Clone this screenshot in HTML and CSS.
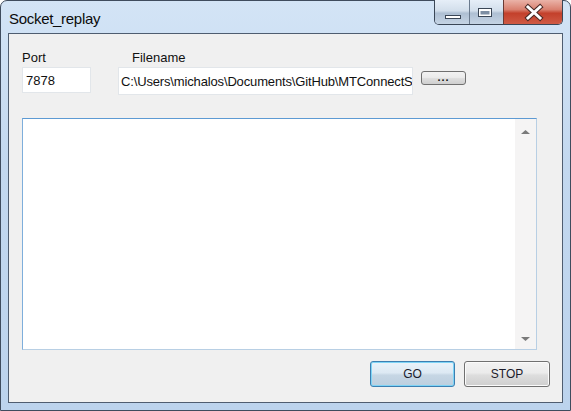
FILE: index.html
```html
<!DOCTYPE html>
<html>
<head>
<meta charset="utf-8">
<link rel="stylesheet" href="styles.css">
</head>
<body>
<div class="window">
  <div class="titlebar">
    <div class="title">Socket_replay</div>
    <div class="caption">
      <div class="cbtn min">
        <svg width="34" height="24" viewBox="0 0 34 24"><rect x="10.5" y="15.5" width="15" height="3" fill="#fff" stroke="#3a4656" stroke-width="1"/></svg>
      </div>
      <div class="cbtn max">
        <svg width="33" height="24" viewBox="0 0 33 24"><rect x="8.5" y="8.5" width="13" height="8" fill="#fff" stroke="#3a4656" stroke-width="1"/><rect x="10.5" y="11" width="9" height="3.5" fill="#7d8ea3"/></svg>
      </div>
      <div class="cbtn close">
        <svg width="59" height="24" viewBox="0 0 59 24"><path d="M24 7 L36 18 M36 7 L24 18" stroke="#4a2a26" stroke-width="5" stroke-linecap="square"/><path d="M24 7 L36 18 M36 7 L24 18" stroke="#ffffff" stroke-width="3" stroke-linecap="square"/></svg>
      </div>
    </div>
  </div>
  <div class="client">
    <div class="fields">
      <div class="field port">
        <div class="label">Port</div>
        <div class="textbox port-box">7878</div>
      </div>
      <div class="field file">
        <div class="label file-label">Filename</div>
        <div class="textbox file-box"><span class="path">C:\Users\michalos\Documents\GitHub\MTConnectS</span></div>
      </div>
      <div class="browse"><span class="dots">...</span></div>
    </div>
    <div class="log">
      <div class="log-text"></div>
      <div class="scrollbar">
        <svg class="arrow" width="21" height="10" viewBox="0 0 21 10"><path d="M6 7 L10.5 3 L15 7 Z" fill="#7a7a7a"/></svg>
        <svg class="arrow" width="21" height="10" viewBox="0 0 21 10"><path d="M6 3 L10.5 7 L15 3 Z" fill="#7a7a7a"/></svg>
      </div>
    </div>
    <div class="actions">
      <div class="btn go">GO</div>
      <div class="btn stop">STOP</div>
    </div>
  </div>
</div>
</body>
</html>
```
FILE: styles.css
```css
html, body {
  margin: 0;
  padding: 0;
  width: 571px;
  height: 411px;
  overflow: hidden;
  background: #ffffff;
}

.window {
  box-sizing: border-box;
  width: 571px;
  height: 411px;
  border: 1px solid #3f4c5e;
  border-radius: 7px 7px 0 0;
  background: linear-gradient(180deg, #d3e4f6 0%, #c3d8ef 40%, #bcd3ed 100%);
  display: flex;
  flex-direction: column;
  font-family: "Liberation Sans", Arial, sans-serif;
  color: #111;
}

.titlebar {
  height: 32px;
  display: flex;
  justify-content: space-between;
  align-items: flex-start;
  padding: 0 7px 0 8px;
}

.title {
  font-size: 15px;
  padding-top: 9px;
  letter-spacing: -0.3px;
  color: #0c0c0c;
}

.caption {
  display: flex;
  margin-top: -1px;
  height: 24px;
  border: 1px solid #3a4656;
  border-top: none;
  border-radius: 0 0 5px 5px;
  overflow: hidden;
}

.cbtn {
  height: 24px;
}

.cbtn svg {
  display: block;
}

.min {
  width: 34px;
  border-right: 1px solid #6a7a8e;
  background: linear-gradient(180deg, #e6eef8 0%, #d2deeb 45%, #aebfd3 55%, #c5d4e4 100%);
}

.max {
  width: 33px;
  border-right: 1px solid #6a3a34;
  background: linear-gradient(180deg, #e6eef8 0%, #d2deeb 45%, #aebfd3 55%, #c5d4e4 100%);
}

.close {
  width: 58px;
  background: linear-gradient(180deg, #eab3a8 0%, #d9806f 40%, #c3402b 55%, #cf5a45 100%);
}

.client {
  box-sizing: border-box;
  margin: 0 7px 7px 7px;
  flex: 1;
  border: 1px solid #4f5d70;
  background: #f0f0f0;
  padding: 16px 12px 0 13px;
  display: flex;
  flex-direction: column;
}

.fields {
  display: flex;
  align-items: flex-end;
}

.field {
  display: flex;
  flex-direction: column;
}

.label {
  font-size: 13px;
  line-height: 15px;
  margin-bottom: 2px;
}

.file {
  margin-left: 27px;
}

.file-label {
  padding-left: 14px;
}

.textbox {
  box-sizing: border-box;
  background: #ffffff;
  border: 1px solid #e2e6ea;
  font-size: 13px;
  white-space: nowrap;
  overflow: hidden;
}

.port-box {
  width: 69px;
  height: 26px;
  padding: 5px 0 0 3px;
  margin-bottom: 2px;
}

.file-box {
  width: 295px;
  height: 28px;
  padding: 6px 0 0 2px;
}

.path {
  letter-spacing: -0.15px;
}

.browse {
  box-sizing: border-box;
  width: 45px;
  height: 14px;
  margin-left: 8px;
  margin-bottom: 10px;
  border: 1px solid #707070;
  border-radius: 3px;
  background: linear-gradient(180deg, #f2f2f2 0%, #ebebeb 45%, #dddddd 55%, #cfcfcf 100%);
  display: flex;
  justify-content: center;
  align-items: center;
  overflow: hidden;
}

.dots {
  font-size: 11px;
  line-height: 12px;
  font-weight: bold;
  letter-spacing: 1px;
  margin-top: -2px;
}

.log {
  box-sizing: border-box;
  margin-top: 23px;
  width: 515px;
  height: 232px;
  border: 1px solid #b8cfe4;
  border-top-color: #5d9ad3;
  border-left-color: #7eaedb;
  background: #ffffff;
  display: flex;
}

.log-text {
  flex: 1;
}

.scrollbar {
  width: 21px;
  background: #f5f4f4;
  display: flex;
  flex-direction: column;
  justify-content: space-between;
  padding: 8px 0 5px 0;
}

.arrow {
  display: block;
}

.actions {
  display: flex;
  justify-content: flex-end;
  gap: 9px;
  margin-top: 11px;
}

.btn {
  box-sizing: border-box;
  height: 26px;
  border-radius: 3px;
  font-size: 12px;
  line-height: 24px;
  text-align: center;
  color: #1b1b2b;
}

.go {
  width: 85px;
  border: 1px solid #3c7fb1;
  box-shadow: inset 0 0 0 1px #7ed4f6;
  background: linear-gradient(180deg, #eaf3fa 0%, #dde9f3 45%, #c6d6e4 55%, #bccfdf 100%);
}

.stop {
  width: 86px;
  border: 1px solid #707070;
  box-shadow: inset 0 0 0 1px #fbfbfb;
  background: linear-gradient(180deg, #f2f2f2 0%, #ebebeb 45%, #dddddd 55%, #cfcfcf 100%);
}
```
